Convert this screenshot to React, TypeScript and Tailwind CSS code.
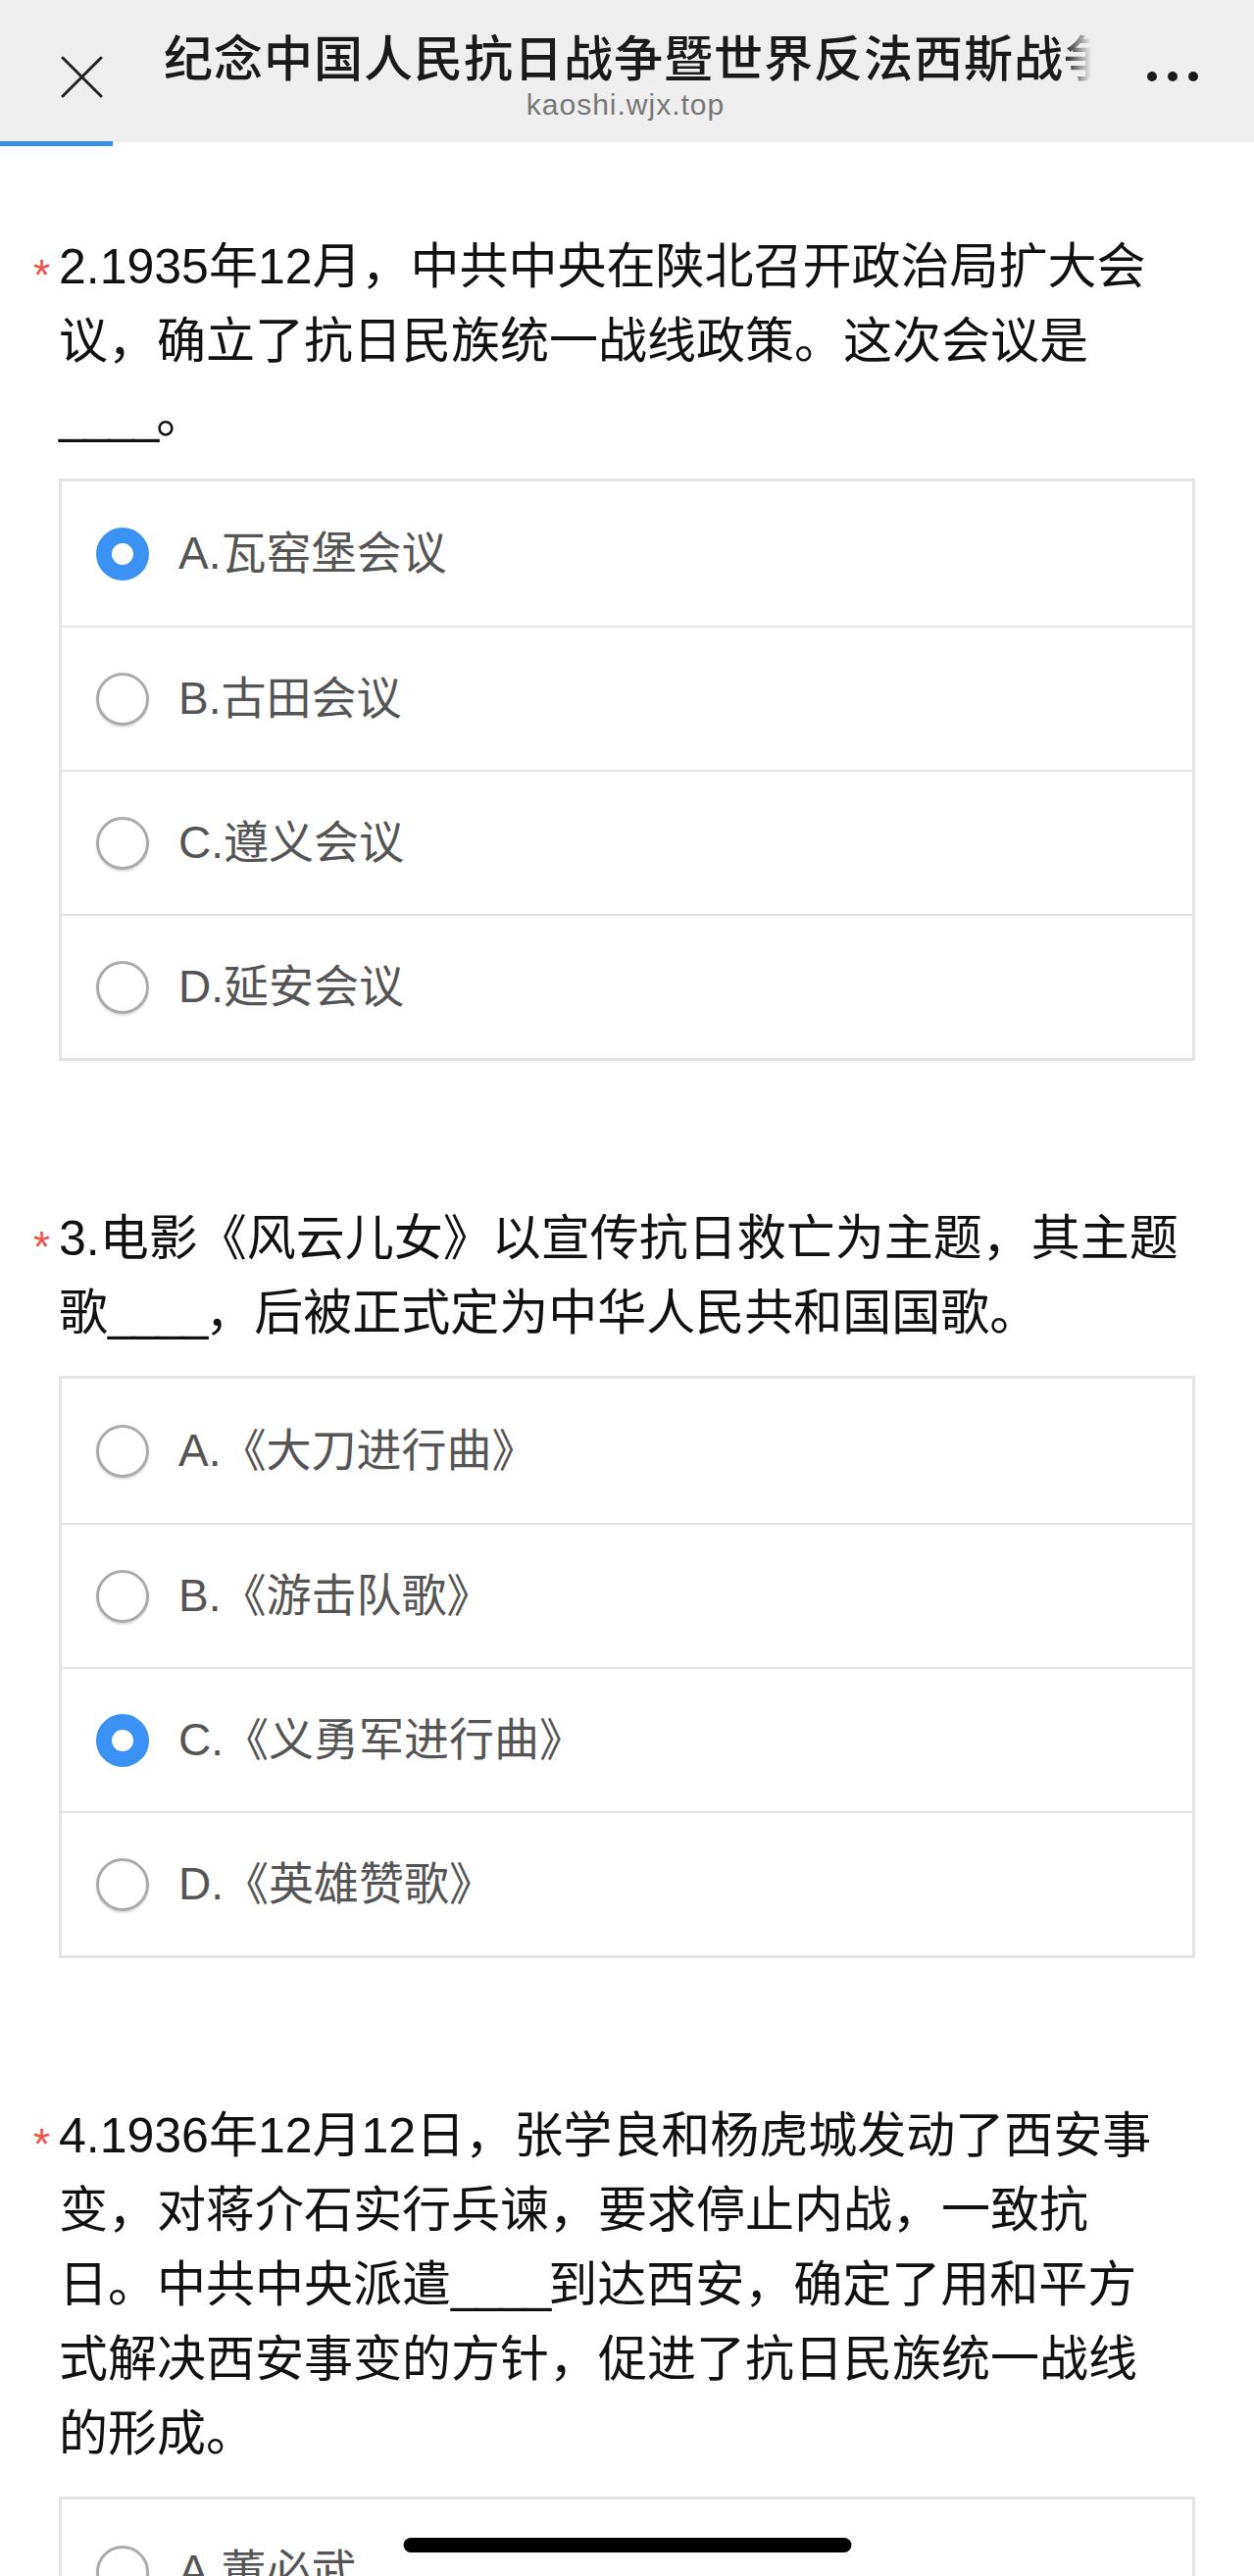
const font = {
  fontFamily: '"Liberation Sans", "Noto Sans CJK SC", sans-serif',
};

type Question = {
  lines: string[];
  options: string[];
  picked: number;
};

const questions: Question[] = [
  {
    lines: [
      "2.1935年12月，中共中央在陕北召开政治局扩大会",
      "议，确立了抗日民族统一战线政策。这次会议是",
      "____。",
    ],
    options: ["A.瓦窑堡会议", "B.古田会议", "C.遵义会议", "D.延安会议"],
    picked: 0,
  },
  {
    lines: [
      "3.电影《风云儿女》以宣传抗日救亡为主题，其主题",
      "歌____，后被正式定为中华人民共和国国歌。",
    ],
    options: ["A.《大刀进行曲》", "B.《游击队歌》", "C.《义勇军进行曲》", "D.《英雄赞歌》"],
    picked: 2,
  },
  {
    lines: [
      "4.1936年12月12日，张学良和杨虎城发动了西安事",
      "变，对蒋介石实行兵谏，要求停止内战，一致抗",
      "日。中共中央派遣____到达西安，确定了用和平方",
      "式解决西安事变的方针，促进了抗日民族统一战线",
      "的形成。",
    ],
    options: ["A.董必武", "B.周恩来", "C.刘少奇", "D.朱德"],
    picked: -1,
  },
];

function Radio({ on }: { on: boolean }) {
  if (on) {
    return <span className="block w-[54px] h-[54px] shrink-0 rounded-full border-[16px] border-[#3b92f4] bg-white" />;
  }
  return (
    <span className="block w-[54px] h-[54px] shrink-0 rounded-full border-[3px] border-[#ababab] bg-white shadow-[0_2px_2px_rgba(0,0,0,0.12)]" />
  );
}

// blanks render a little tighter than Liberation's underscore
function Line({ text }: { text: string }) {
  const parts = text.split("____");
  return (
    <div className="whitespace-nowrap">
      {parts.map((p, i) => (
        <span key={i}>
          {p}
          {i < parts.length - 1 && <span className="tracking-[-3px]">____</span>}
        </span>
      ))}
    </div>
  );
}

function QuestionBlock({ q }: { q: Question }) {
  return (
    <section className="mb-[143px]">
      <div className="relative text-[50px] leading-[76px] text-[#111]">
        <span className="absolute -left-[26px] top-[25px] text-[44px] leading-none text-[#ef5350]">*</span>
        {q.lines.map((line) => (
          <Line key={line} text={line} />
        ))}
      </div>
      <div className="mt-[26px] border-[3px] border-[#e4e4e4] bg-white">
        {q.options.map((opt, i) => (
          <div
            key={opt}
            className={`flex items-center h-[147px] pl-[35px] gap-[30px] ${i > 0 ? "border-t-2 border-[#e4e4e4]" : ""}`}
          >
            <Radio on={i === q.picked} />
            <span className="text-[46px] text-[#555]">{opt}</span>
          </div>
        ))}
      </div>
    </section>
  );
}

export default function App() {
  return (
    <main style={font} className="relative w-full h-[2627px] overflow-hidden bg-white">
      <header className="flex items-start h-[145px] bg-[#efefef]">
        <svg className="ml-[62px] mt-[57px] shrink-0" width="43" height="43" viewBox="0 0 43 43">
          <path d="M2 2L41 41M41 2L2 41" stroke="#222" strokeWidth="3" strokeLinecap="round" />
        </svg>
        <div className="ml-[62px] mt-[31px] w-[942px] flex flex-col">
          <div className="w-[950px] overflow-hidden whitespace-nowrap text-[50px] tracking-[1px] font-medium leading-[60px] text-[#1a1a1a] [mask-image:linear-gradient(to_right,#000_918px,transparent_946px)]">
            纪念中国人民抗日战争暨世界反法西斯战争胜利80周年
          </div>
          <div className="-mt-[2px] text-center text-[30px] leading-[36px] tracking-[1px] text-[#777]">kaoshi.wjx.top</div>
        </div>
        <div className="ml-[61px] mt-[73px] flex gap-[11px]">
          <span className="w-[10px] h-[10px] rounded-full bg-[#1a1a1a]" />
          <span className="w-[10px] h-[10px] rounded-full bg-[#1a1a1a]" />
          <span className="w-[10px] h-[10px] rounded-full bg-[#1a1a1a]" />
        </div>
      </header>
      <div className="h-[5px] w-[115px] -mt-[1px] bg-[#3a8de0]" />

      <div className="px-[60px] pt-[85px]">
        {questions.map((q) => (
          <QuestionBlock key={q.lines[0]} q={q} />
        ))}
      </div>

      <div className="absolute bottom-[24px] left-1/2 -translate-x-1/2 w-[457px] h-[15px] rounded-full bg-black" />
    </main>
  );
}
